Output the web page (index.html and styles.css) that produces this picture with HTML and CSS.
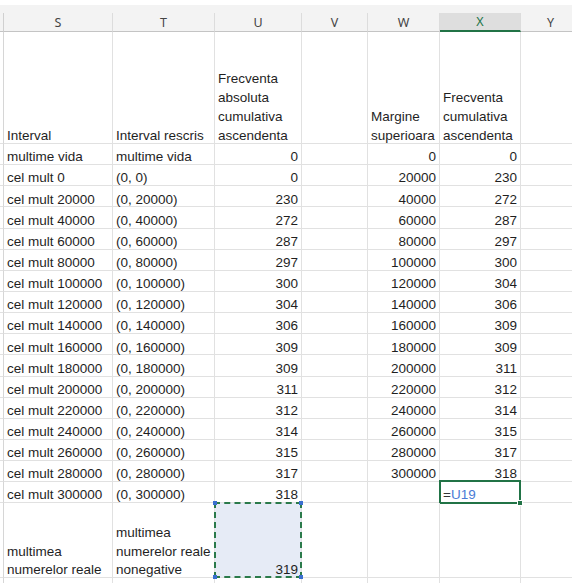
FILE: index.html
```html
<!DOCTYPE html>
<html lang="ro">
<head>
<meta charset="utf-8">
<title>Foaie de calcul</title>
<link rel="stylesheet" href="styles.css">
</head>
<body>
<div class="topgap"></div>
<div class="sheet">
  <!-- column headers -->
  <div class="ch stub"></div>
  <div class="ch">S</div>
  <div class="ch">T</div>
  <div class="ch">U</div>
  <div class="ch">V</div>
  <div class="ch">W</div>
  <div class="ch active">X</div>
  <div class="ch">Y</div>

  <!-- row 1 (titles) -->
  <div class="c stub"></div>
  <div class="c"><span>Interval</span></div>
  <div class="c"><span>Interval rescris</span></div>
  <div class="c"><span>Frecventa<br>absoluta<br>cumulativa<br>ascendenta</span></div>
  <div class="c"></div>
  <div class="c"><span>Margine<br>superioara</span></div>
  <div class="c"><span>Frecventa<br>cumulativa<br>ascendenta</span></div>
  <div class="c"></div>

  <div class="c stub"></div><div class="c"><span>multime vida</span></div><div class="c"><span>multime vida</span></div><div class="c n"><span>0</span></div><div class="c"></div><div class="c n"><span>0</span></div><div class="c n"><span>0</span></div><div class="c"></div>
  <div class="c stub"></div><div class="c"><span>cel mult 0</span></div><div class="c"><span>(0, 0)</span></div><div class="c n"><span>0</span></div><div class="c"></div><div class="c n"><span>20000</span></div><div class="c n"><span>230</span></div><div class="c"></div>
  <div class="c stub"></div><div class="c"><span>cel mult 20000</span></div><div class="c"><span>(0, 20000)</span></div><div class="c n"><span>230</span></div><div class="c"></div><div class="c n"><span>40000</span></div><div class="c n"><span>272</span></div><div class="c"></div>
  <div class="c stub"></div><div class="c"><span>cel mult 40000</span></div><div class="c"><span>(0, 40000)</span></div><div class="c n"><span>272</span></div><div class="c"></div><div class="c n"><span>60000</span></div><div class="c n"><span>287</span></div><div class="c"></div>
  <div class="c stub"></div><div class="c"><span>cel mult 60000</span></div><div class="c"><span>(0, 60000)</span></div><div class="c n"><span>287</span></div><div class="c"></div><div class="c n"><span>80000</span></div><div class="c n"><span>297</span></div><div class="c"></div>
  <div class="c stub"></div><div class="c"><span>cel mult 80000</span></div><div class="c"><span>(0, 80000)</span></div><div class="c n"><span>297</span></div><div class="c"></div><div class="c n"><span>100000</span></div><div class="c n"><span>300</span></div><div class="c"></div>
  <div class="c stub"></div><div class="c"><span>cel mult 100000</span></div><div class="c"><span>(0, 100000)</span></div><div class="c n"><span>300</span></div><div class="c"></div><div class="c n"><span>120000</span></div><div class="c n"><span>304</span></div><div class="c"></div>
  <div class="c stub"></div><div class="c"><span>cel mult 120000</span></div><div class="c"><span>(0, 120000)</span></div><div class="c n"><span>304</span></div><div class="c"></div><div class="c n"><span>140000</span></div><div class="c n"><span>306</span></div><div class="c"></div>
  <div class="c stub"></div><div class="c"><span>cel mult 140000</span></div><div class="c"><span>(0, 140000)</span></div><div class="c n"><span>306</span></div><div class="c"></div><div class="c n"><span>160000</span></div><div class="c n"><span>309</span></div><div class="c"></div>
  <div class="c stub"></div><div class="c"><span>cel mult 160000</span></div><div class="c"><span>(0, 160000)</span></div><div class="c n"><span>309</span></div><div class="c"></div><div class="c n"><span>180000</span></div><div class="c n"><span>309</span></div><div class="c"></div>
  <div class="c stub"></div><div class="c"><span>cel mult 180000</span></div><div class="c"><span>(0, 180000)</span></div><div class="c n"><span>309</span></div><div class="c"></div><div class="c n"><span>200000</span></div><div class="c n"><span>311</span></div><div class="c"></div>
  <div class="c stub"></div><div class="c"><span>cel mult 200000</span></div><div class="c"><span>(0, 200000)</span></div><div class="c n"><span>311</span></div><div class="c"></div><div class="c n"><span>220000</span></div><div class="c n"><span>312</span></div><div class="c"></div>
  <div class="c stub"></div><div class="c"><span>cel mult 220000</span></div><div class="c"><span>(0, 220000)</span></div><div class="c n"><span>312</span></div><div class="c"></div><div class="c n"><span>240000</span></div><div class="c n"><span>314</span></div><div class="c"></div>
  <div class="c stub"></div><div class="c"><span>cel mult 240000</span></div><div class="c"><span>(0, 240000)</span></div><div class="c n"><span>314</span></div><div class="c"></div><div class="c n"><span>260000</span></div><div class="c n"><span>315</span></div><div class="c"></div>
  <div class="c stub"></div><div class="c"><span>cel mult 260000</span></div><div class="c"><span>(0, 260000)</span></div><div class="c n"><span>315</span></div><div class="c"></div><div class="c n"><span>280000</span></div><div class="c n"><span>317</span></div><div class="c"></div>
  <div class="c stub"></div><div class="c"><span>cel mult 280000</span></div><div class="c"><span>(0, 280000)</span></div><div class="c n"><span>317</span></div><div class="c"></div><div class="c n"><span>300000</span></div><div class="c n"><span>318</span></div><div class="c"></div>
  <div class="c stub"></div><div class="c"><span>cel mult 300000</span></div><div class="c"><span>(0, 300000)</span></div><div class="c n"><span>318</span></div><div class="c"></div><div class="c"></div>
  <div class="c editing"><span class="eq">=</span><span class="ref">U19</span><i class="fill-handle"></i></div><div class="c"></div>

  <!-- last row -->
  <div class="c stub"></div>
  <div class="c"><span>multimea<br>numerelor reale</span></div>
  <div class="c"><span>multimea<br>numerelor reale<br>nonegative</span></div>
  <div class="c n copied"><span>319</span><i class="hdl tl"></i><i class="hdl tr"></i><i class="hdl bl"></i><i class="hdl br"></i></div>
  <div class="c"></div><div class="c"></div><div class="c"></div><div class="c"></div>

  <div class="c stub"></div><div class="c"></div><div class="c"></div><div class="c"></div><div class="c"></div><div class="c"></div><div class="c"></div><div class="c"></div>
</div>
</body>
</html>
```

FILE: styles.css
```css
html, body {
  margin: 0;
  padding: 0;
  background: #ffffff;
  overflow: hidden;
}

body {
  width: 572px;
  height: 583px;
  font-family: "Liberation Sans", Arial, sans-serif;
  font-size: 13.5px;
  color: #1f1f1f;
}

.topgap {
  height: 5px;
  background: #ffffff;
}

.sheet {
  display: grid;
  grid-template-columns: 4px 109px 102px 87px 66px 72px 81px 60px;
  grid-template-rows: 27px 112px repeat(17, 21.15px) 75px 20px;
  width: 581px;
}

.ch {
  background: #f3f3f3;
  border-right: 1px solid #dcdcdc;
  border-bottom: 1px solid #c4c4c4;
  box-sizing: border-box;
  display: flex;
  align-items: flex-end;
  justify-content: center;
  padding-bottom: 0;
  height: 27px;
  line-height: 17px;
  font-family: "Noto Sans", "Open Sans", sans-serif;
  font-size: 12.5px;
  color: #444444;
  background-image: linear-gradient(#f3f3f3 0 8px, transparent 8px);
  position: relative;
}

.ch::before {
  content: "";
  position: absolute;
  right: -1px;
  top: 0;
  width: 1px;
  height: 8px;
  background: #f3f3f3;
}

.ch.active {
  background-color: #dedede;
  background-image: linear-gradient(#f3f3f3 0 8px, transparent 8px);
  color: #217346;
  border-bottom: 2px solid #217346;
  padding-bottom: 0;
}

.ch.stub {
  border-right-color: #d0d0d0;
}

.c {
  box-sizing: border-box;
  border-right: 1px solid #e1e1e1;
  border-bottom: 1px solid #e1e1e1;
  display: flex;
  align-items: flex-end;
  padding: 0 3px;
  line-height: 18.9px;
  white-space: nowrap;
  overflow: visible;
  position: relative;
  min-width: 0;
}

.c > span {
  margin-bottom: -3px;
}

.c.n {
  justify-content: flex-end;
  padding-right: 3px;
}

.c.stub {
  border-right-color: #d6d6d6;
  padding: 0;
}

.editing {
  padding-left: 3px;
}

.editing::after {
  content: "";
  position: absolute;
  left: -1px;
  top: -2px;
  right: -1px;
  bottom: -2px;
  border: 2px solid #217346;
  pointer-events: none;
}

.editing .eq {
  color: #333333;
}

.editing .ref {
  color: #4a7bd6;
}

.fill-handle {
  position: absolute;
  right: -3px;
  bottom: -4px;
  width: 4px;
  height: 4px;
  background: #217346;
  border: 1px solid #ffffff;
  z-index: 3;
}

.copied {
  background: #e6ebf6;
}

.copied::after {
  content: "";
  position: absolute;
  left: -1px;
  top: -1px;
  right: -1px;
  bottom: -1px;
  border: 2px dashed #2b7a4b;
  pointer-events: none;
}

.hdl {
  position: absolute;
  width: 4px;
  height: 4px;
  background: #3a6fd0;
  z-index: 3;
}

.hdl.tl { left: -2px; top: -2px; }
.hdl.tr { right: -2px; top: -2px; }
.hdl.bl { left: -2px; bottom: -2px; }
.hdl.br { right: -2px; bottom: -2px; }
```
